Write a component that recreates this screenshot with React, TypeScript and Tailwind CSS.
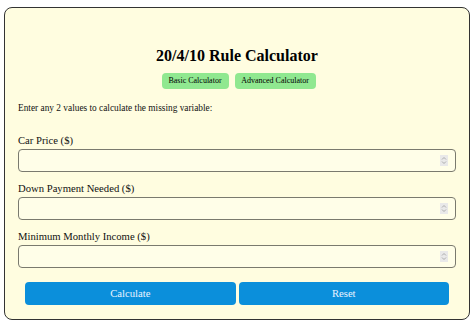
import React from "react";

const Spinner = () => (
  <div className="mr-[7px] flex h-[11px] w-[8px] items-center justify-center bg-[#e9e9e9]">
    <svg width="6" height="9" viewBox="0 0 6 9" fill="none" stroke="#9a9a9a" strokeWidth="0.8">
      <path d="M1 3.5 L3 1.5 L5 3.5" />
      <path d="M1 5.5 L3 7.5 L5 5.5" />
    </svg>
  </div>
);

const Field = ({ label }: { label: string }) => (
  <div className="flex flex-col">
    <label className="mb-[1px] text-[10.67px] leading-[16px] text-[#111]">{label}</label>
    <div className="flex h-[23px] items-center rounded-[4px] border border-[#7a7a6e] bg-[#fffee8]">
      <input type="text" className="min-w-0 flex-1 bg-transparent px-2 outline-none" />
      <Spinner />
    </div>
  </div>
);

export default function App() {
  return (
    <div className="min-h-[326px] w-[474px] bg-white pl-[4px] pt-[7px]" style={{ fontFamily: '"Liberation Serif", "Times New Roman", serif' }}>
      <div className="flex h-[313px] w-[466px] flex-col rounded-[8px] border border-[#333] bg-[#fffde0] px-[13px]">
        <h1 className="mt-[38px] text-center text-[16px] font-bold leading-[20px] text-black">20/4/10 Rule Calculator</h1>
        <div className="mt-[7px] flex justify-center gap-[6px] pl-[3px]">
          <button className="h-[16px] w-[67px] rounded-[4px] bg-[#90e890] text-[8px] leading-[16px] text-black">Basic Calculator</button>
          <button className="h-[16px] w-[81px] rounded-[4px] bg-[#90e890] text-[8px] leading-[16px] text-black">Advanced Calculator</button>
        </div>
        <p className="mt-[12px] text-[9.33px] leading-[14px] text-[#111]">Enter any 2 values to calculate the missing variable:</p>
        <div className="mt-[17px] flex flex-col gap-[8px]">
          <Field label="Car Price ($)" />
          <Field label="Down Payment Needed ($)" />
          <Field label="Minimum Monthly Income ($)" />
        </div>
        <div className="mt-[14px] flex gap-[3px] px-[7px]">
          <button className="h-[23px] flex-1 rounded-[4px] bg-[#0b8fdb] text-[10.67px] leading-[23px] text-[#eaf4ff]">Calculate</button>
          <button className="h-[23px] flex-1 rounded-[4px] bg-[#0b8fdb] text-[10.67px] leading-[23px] text-[#eaf4ff]">Reset</button>
        </div>
      </div>
    </div>
  );
}
